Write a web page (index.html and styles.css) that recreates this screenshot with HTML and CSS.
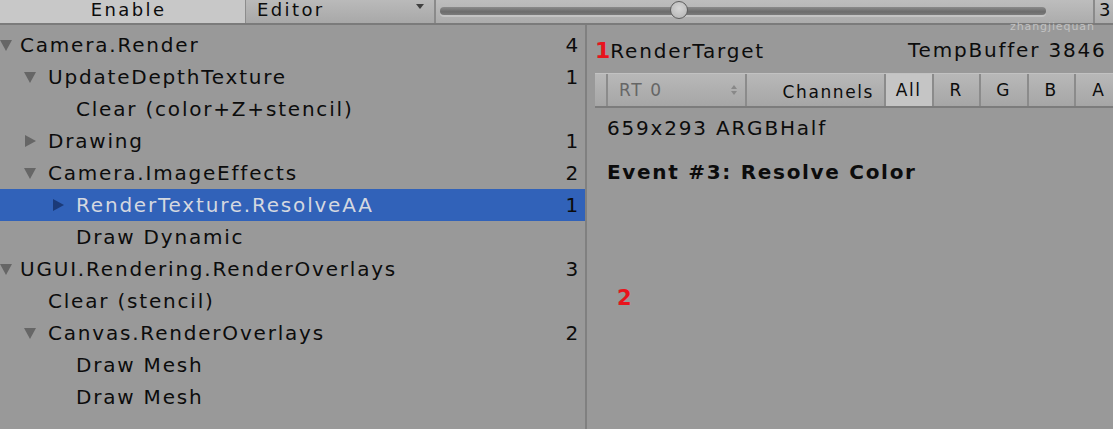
FILE: index.html
```html
<!DOCTYPE html>
<html>
<head>
<meta charset="utf-8">
<link rel="stylesheet" href="styles.css">
</head>
<body>
<div class="toolbar">
  <div class="tb-enable">Enable</div>
  <div class="tb-editor"><span>Editor</span><span class="dd-arrow"></span></div>
  <div class="tb-slider">
    <div class="track"></div>
    <div class="thumb"></div>
  </div>
  <div class="tb-num">3</div>
</div>
<div class="watermark">zhangjiequan</div>
<div class="main">
  <div class="tree">
    <div class="row l0"><span class="arr down"></span><span class="label">Camera.Render</span><span class="count">4</span></div>
    <div class="row l1"><span class="arr down"></span><span class="label">UpdateDepthTexture</span><span class="count">1</span></div>
    <div class="row l2"><span class="arr none"></span><span class="label">Clear (color+Z+stencil)</span><span class="count"></span></div>
    <div class="row l1"><span class="arr right"></span><span class="label">Drawing</span><span class="count">1</span></div>
    <div class="row l1"><span class="arr down"></span><span class="label">Camera.ImageEffects</span><span class="count">2</span></div>
    <div class="row l2 sel"><span class="arr right"></span><span class="label">RenderTexture.ResolveAA</span><span class="count">1</span></div>
    <div class="row l2"><span class="arr none"></span><span class="label">Draw Dynamic</span><span class="count"></span></div>
    <div class="row l0"><span class="arr down"></span><span class="label">UGUI.Rendering.RenderOverlays</span><span class="count">3</span></div>
    <div class="row l1"><span class="arr none"></span><span class="label">Clear (stencil)</span><span class="count"></span></div>
    <div class="row l1"><span class="arr down"></span><span class="label">Canvas.RenderOverlays</span><span class="count">2</span></div>
    <div class="row l2"><span class="arr none"></span><span class="label">Draw Mesh</span><span class="count"></span></div>
    <div class="row l2"><span class="arr none"></span><span class="label">Draw Mesh</span><span class="count"></span></div>
  </div>
  <div class="detail">
    <div class="rt-head">
      <div class="rt-name"><span class="mark">1</span>RenderTarget</div>
      <div class="rt-buf">TempBuffer 3846</div>
    </div>
    <div class="rt-bar">
      <div class="rt-pad"></div>
      <div class="rt-select"><span>RT 0</span><span class="updown"></span></div>
      <div class="rt-chan">Channels</div>
      <div class="ch on">All</div>
      <div class="ch">R</div>
      <div class="ch">G</div>
      <div class="ch">B</div>
      <div class="ch">A</div>
    </div>
    <div class="rt-info">659x293 ARGBHalf</div>
    <div class="event">Event #3: Resolve Color</div>
    <div class="mark2">2</div>
  </div>
</div>
</body>
</html>
```
FILE: styles.css
```css
html, body {
  margin: 0;
  padding: 0;
  background: #999999;
  width: 1113px;
  height: 429px;
  overflow: hidden;
  font-family: "DejaVu Sans", Verdana, sans-serif;
  font-size: 20px;
  letter-spacing: 1.8px;
  color: #0c0c0c;
  position: relative;
}

.toolbar {
  display: flex;
  height: 23px;
  border-bottom: 2px solid #7b7b7b;
  background: linear-gradient(#bdbdbd, #acacac);
}

.tb-enable {
  width: 246px;
  background: #c8c8c8;
  text-align: center;
  line-height: 19px;
  font-size: 18px;
  letter-spacing: 2.4px;
  border-right: 1px solid #8c8c8c;
  box-sizing: border-box;
  padding-left: 12px;
}

.tb-editor {
  width: 190px;
  display: flex;
  align-items: flex-start;
  justify-content: space-between;
  padding: 0 10px 0 11px;
  box-sizing: border-box;
  font-size: 18px;
  line-height: 19px;
  letter-spacing: 2.4px;
  border-right: 2px solid #8a8a8a;
  background: linear-gradient(#bababa, #a8a8a8);
}

.dd-arrow {
  width: 0;
  height: 0;
  border-left: 4px solid transparent;
  border-right: 4px solid transparent;
  border-top: 5px solid #404040;
  margin-top: 4px;
}

.tb-slider {
  flex: 1;
  position: relative;
  padding: 0 47px 0 4px;
  display: flex;
  align-items: center;
}

.track {
  flex: 1;
  height: 8px;
  margin-top: -2px;
  border-radius: 4px;
  background: linear-gradient(#8a8a8a, #6c6c6c 60%, #7c7c7c);
  box-shadow: 0 2px 0 #c4c4c4;
}

.thumb {
  position: absolute;
  left: 234px;
  top: 1px;
  width: 16px;
  height: 16px;
  border-radius: 50%;
  border: 1px solid #5e5e5e;
  background: radial-gradient(circle at 50% 40%, #d6d6d6, #b2b2b2);
}

.tb-num {
  width: 14px;
  border-left: 2px solid #8a8a8a;
  padding-left: 4px;
  line-height: 19px;
  font-size: 18px;
  overflow: hidden;
}

.watermark {
  position: absolute;
  left: 1010px;
  top: 20px;
  font-size: 11px;
  letter-spacing: 0.9px;
  color: #c2c2c2;
}

.main {
  display: flex;
  height: 404px;
}

.tree {
  width: 585px;
  border-right: 2px solid #808080;
  padding-top: 4px;
  flex: none;
}

.row {
  display: flex;
  align-items: center;
  height: 32px;
  padding-right: 5px;
}

.row.l0 { padding-left: 0; }
.row.l1 { padding-left: 24px; }
.row.l2 { padding-left: 52px; }

.arr {
  width: 20px;
  height: 10px;
  flex: none;
  position: relative;
}

.arr.down::before {
  content: "";
  position: absolute;
  left: 0;
  top: 0;
  border-left: 6px solid transparent;
  border-right: 6px solid transparent;
  border-top: 11px solid #666666;
}

.arr.right::before {
  content: "";
  position: absolute;
  left: 1px;
  top: -1px;
  border-top: 6.5px solid transparent;
  border-bottom: 6.5px solid transparent;
  border-left: 11px solid #666666;
}

.label {
  flex: 1;
  white-space: nowrap;
}

.l1 .label, .l2 .label { margin-left: 4px; }

.count {
  width: 20px;
  text-align: right;
}

.row.sel {
  background: #3162b9;
}

.row.sel .label {
  color: #d4d8e0;
}

.row.sel .arr.right::before {
  border-left-color: #1b3a78;
}

.detail {
  flex: 1;
  padding: 11px 0 0 8px;
}

.rt-head {
  display: flex;
  justify-content: space-between;
  align-items: center;
  height: 28px;
  padding-right: 15px;
}

.mark {
  color: #e8141c;
  font-weight: bold;
  letter-spacing: 0;
  font-size: 22px;
}

.rt-bar {
  display: flex;
  height: 32px;
  margin-top: 9px;
  border-top: 1px solid #c2c2c2;
  border-bottom: 2px solid #7c7c7c;
  background: linear-gradient(#b8b8b8, #a6a6a6);
  align-items: stretch;
  font-size: 17px;
  letter-spacing: 1.6px;
}

.rt-pad {
  width: 11px;
  border-right: 2px solid #8b8b8b;
}

.rt-select {
  width: 139px;
  display: flex;
  align-items: center;
  justify-content: space-between;
  padding: 0 8px 0 11px;
  box-sizing: border-box;
  color: #666;
  border-right: 2px solid #8b8b8b;
}

.updown {
  width: 6px;
  height: 10px;
  position: relative;
}
.updown::before, .updown::after {
  content: "";
  position: absolute;
  left: 0;
  border-left: 3px solid transparent;
  border-right: 3px solid transparent;
}
.updown::before { top: 0; border-bottom: 4px solid #888; }
.updown::after { bottom: 0; border-top: 4px solid #888; }

.rt-chan {
  width: 137px;
  display: flex;
  align-items: center;
  justify-content: flex-end;
  padding-right: 10px;
  box-sizing: border-box;
  padding-top: 4px;
}

.ch {
  width: 47.5px;
  flex: none;
  display: flex;
  align-items: center;
  justify-content: center;
  border-left: 2px solid #8b8b8b;
  box-sizing: border-box;
}

.ch.on {
  background: #c5c5c5;
}

.rt-info {
  margin-top: 6px;
  padding-left: 12px;
  height: 28px;
  line-height: 28px;
}

.event {
  margin-top: 18px;
  padding-left: 12px;
  font-weight: bold;
  letter-spacing: 1.7px;
}

.mark2 {
  margin-top: 102px;
  margin-left: 22px;
  color: #e8141c;
  font-weight: bold;
  font-size: 21px;
}
```
